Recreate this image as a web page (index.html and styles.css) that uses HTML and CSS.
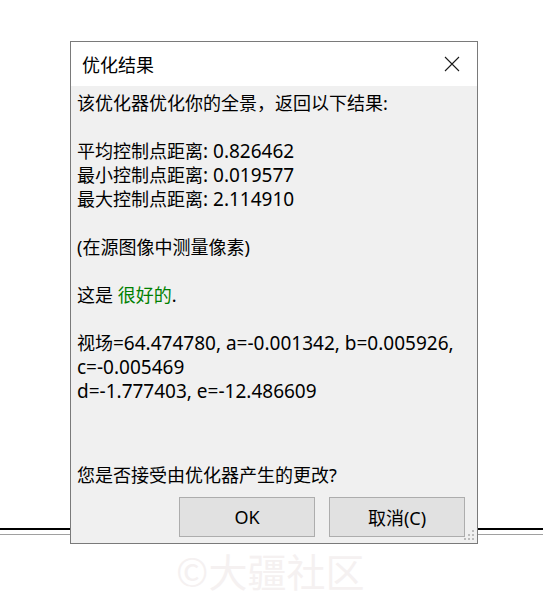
FILE: index.html
```html
<!DOCTYPE html>
<html lang="zh-CN">
<head>
<meta charset="utf-8">
<title>优化结果</title>
<link rel="stylesheet" href="styles.css">
</head>
<body>
<div class="desktop">
  <div class="dialog">
    <div class="titlebar">
      <span class="title">优化结果</span>
      <span class="close" aria-label="关闭">
        <svg width="16" height="16" viewBox="0 0 16 16"><path d="M1 1 L15 15 M15 1 L1 15" stroke="#1a1a1a" stroke-width="1.1" fill="none"/></svg>
      </span>
    </div>
    <div class="body">
      <div class="message">
        <p class="line">该优化器优化你的全景，返回以下结果:</p>
        <p class="line blank">&nbsp;</p>
        <p class="line">平均控制点距离<span class="lat">: 0.826462</span></p>
        <p class="line">最小控制点距离<span class="lat">: 0.019577</span></p>
        <p class="line">最大控制点距离<span class="lat">: 2.114910</span></p>
        <p class="line blank">&nbsp;</p>
        <p class="line">(在源图像中测量像素)</p>
        <p class="line blank">&nbsp;</p>
        <p class="line">这是 <span class="good">很好的</span>.</p>
        <p class="line blank">&nbsp;</p>
        <p class="line">视场<span class="lat">=64.474780, a=-0.001342, b=0.005926,</span></p>
        <p class="line"><span class="lat">c=-0.005469</span></p>
        <p class="line"><span class="lat">d=-1.777403, e=-12.486609</span></p>
      </div>
      <p class="question">您是否接受由优化器产生的更改?</p>
      <div class="buttons">
        <button class="btn">OK</button>
        <button class="btn">取消(C)</button>
      </div>
      <span class="grip"></span>
    </div>
  </div>
  <div class="watermark">©大疆社区</div>
</div>
</body>
</html>
```
FILE: styles.css
```css
html, body {
  margin: 0;
  padding: 0;
  background: #ffffff;
}

.desktop {
  position: relative;
  width: 543px;
  height: 602px;
  padding: 41px 0 0 70px;
  box-sizing: border-box;
  background:
    linear-gradient(#000000, #000000) 0 528px / 100% 2px no-repeat,
    linear-gradient(#a0a0a0, #a0a0a0) 0 534px / 100% 1px no-repeat,
    #ffffff;
  font-family: "Noto Sans", "Noto Sans CJK SC", sans-serif;
  font-size: 18px;
  color: #000000;
}

.dialog {
  width: 408px;
  height: 503px;
  box-sizing: border-box;
  border: 1px solid #7a7a7a;
  background: #f0f0f0;
  display: flex;
  flex-direction: column;
}

.titlebar {
  height: 44px;
  background: #ffffff;
  display: flex;
  align-items: center;
  justify-content: space-between;
  padding: 0 17px 0 11px;
  flex: none;
}

.title {
  font-family: "Noto Sans CJK SC", sans-serif;
  font-size: 18px;
  line-height: 24px;
}

.close {
  display: flex;
  width: 16px;
  height: 16px;
}

.body {
  position: relative;
  flex: 1;
  display: flex;
  flex-direction: column;
  padding: 5px 12px 6px 6px;
}

.message {
  flex: none;
}

.line {
  margin: 0;
  line-height: 24px;
  height: 24px;
  white-space: nowrap;
}

.lat {
  font-size: 19px;
  line-height: 24px;
}

.good {
  color: #008000;
}

.question {
  margin: 60px 0 0 0;
  line-height: 24px;
}

.buttons {
  display: flex;
  justify-content: flex-end;
  gap: 14px;
  margin-top: 10px;
}

.btn {
  width: 136px;
  height: 40px;
  box-sizing: border-box;
  border: 1px solid #adadad;
  background: #e1e1e1;
  font-family: "Noto Sans", "Noto Sans CJK SC", sans-serif;
  font-size: 18px;
  color: #000000;
  padding: 0;
  border-radius: 0;
}

.grip {
  position: absolute;
  right: 2px;
  bottom: 2px;
  width: 11px;
  height: 11px;
  background:
    linear-gradient(#bcbcbc, #bcbcbc) 8px 0 / 2px 2px no-repeat,
    linear-gradient(#bcbcbc, #bcbcbc) 4px 4px / 2px 2px no-repeat,
    linear-gradient(#bcbcbc, #bcbcbc) 8px 4px / 2px 2px no-repeat,
    linear-gradient(#bcbcbc, #bcbcbc) 0 8px / 2px 2px no-repeat,
    linear-gradient(#bcbcbc, #bcbcbc) 4px 8px / 2px 2px no-repeat,
    linear-gradient(#bcbcbc, #bcbcbc) 8px 8px / 2px 2px no-repeat;
}

.watermark {
  position: absolute;
  left: 176px;
  top: 546px;
  font-family: "Noto Sans CJK SC", sans-serif;
  font-size: 39px;
  line-height: 48px;
  color: #f5f1f1;
}
```
